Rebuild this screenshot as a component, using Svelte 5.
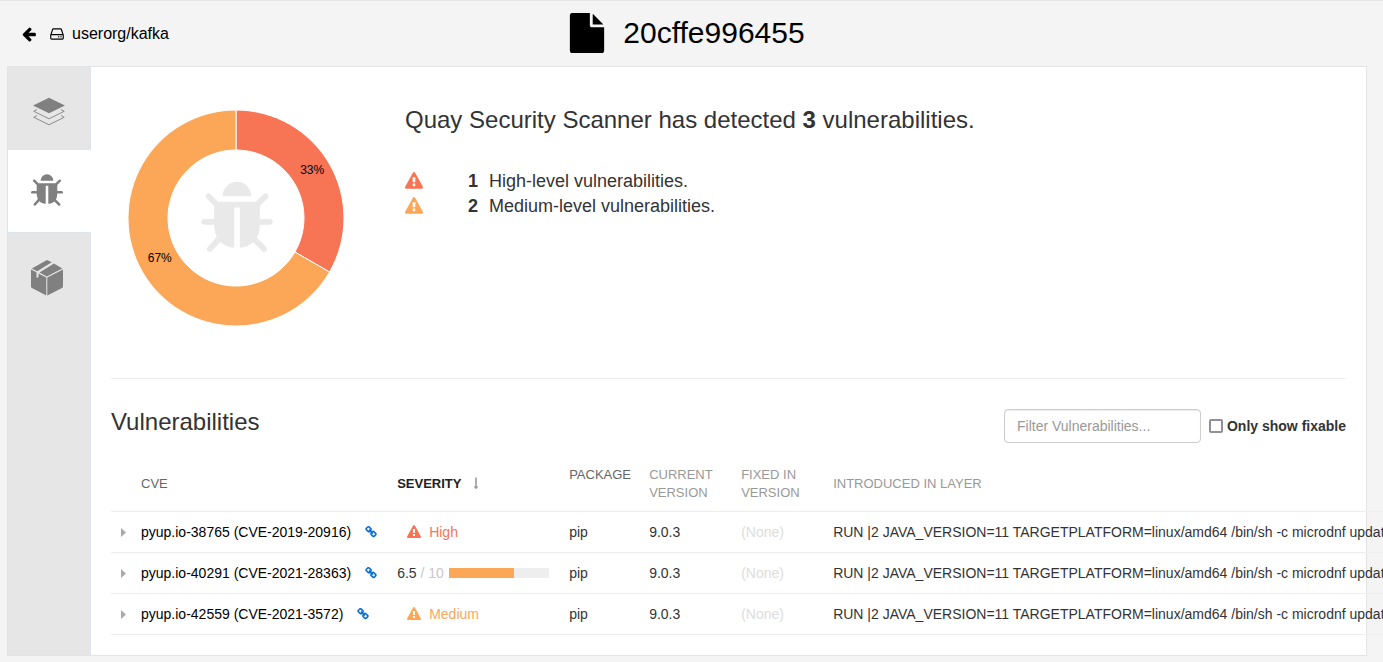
<script>
  const icons = {
    back: 'M1664 896v128q0 53-32.5 90.5t-84.5 37.5h-704l293 294q38 36 38 90t-38 90l-75 76q-37 37-90 37-52 0-91-37l-651-652q-37-37-37-90 0-52 37-91l651-650q38-38 91-38 52 0 90 38l75 74q38 38 38 91t-38 91l-293 293h704q52 0 84.5 37.5t32.5 90.5z',
    drive: 'M1168 1216q0 33-23.5 56.5t-56.5 23.5-56.5-23.5-23.5-56.5 23.5-56.5 56.5-23.5 56.5 23.5 23.5 56.5zm256 0q0 33-23.5 56.5t-56.5 23.5-56.5-23.5-23.5-56.5 23.5-56.5 56.5-23.5 56.5 23.5 23.5 56.5zm112 160v-320q0-13-9.5-22.5t-22.5-9.5h-1216q-13 0-22.5 9.5t-9.5 22.5v320q0 13 9.5 22.5t22.5 9.5h1216q13 0 22.5-9.5t9.5-22.5zm-1230-480h1180l-157-482q-4-13-16-21.5t-26-8.5h-782q-14 0-26 8.5t-16 21.5zm1358 160v320q0 66-47 113t-113 47h-1216q-66 0-113-47t-47-113v-320q0-25 16-75l197-606q17-53 63-86t101-33h782q55 0 101 33t63 86l197 606q16 50 16 75z',
    file: 'M1152 512v-472q22 14 36 28l408 408q14 14 28 36h-472zm-128 32q0 40 28 68t68 28h544v1056q0 40-28 68t-68 28h-1344q-40 0-68-28t-28-68v-1600q0-40 28-68t68-28h800v544z',
    bug: 'M1696 960q0 26-19 45t-45 19h-224q0 171-67 290l208 209q19 19 19 45t-19 45q-18 19-45 19t-45-19l-198-197q-5 5-15 13t-42 28.5-65 36.5-82 29-97 13v-896h-128v896q-51 0-101.5-13.5t-87-33-66-39-43.5-32.5l-15-14-183 207q-20 21-48 21-24 0-43-16-19-18-20.5-44.5t15.5-46.5l202-227q-58-114-58-274h-224q-26 0-45-19t-19-45 19-45 45-19h224v-294l-173-173q-19-19-19-45t19-45 45-19 45 19l173 173h844l173-173q19-19 45-19t45 19 19 45-19 45l-173 173v294h224q26 0 45 19t19 45zm-480-576h-640q0-133 93.5-226.5t226.5-93.5 226.5 93.5 93.5 226.5z',
    warning: 'M1024 1375v-190q0-14-9.5-23.5t-22.5-9.5h-192q-13 0-22.5 9.5t-9.5 23.5v190q0 14 9.5 23.5t22.5 9.5h192q13 0 22.5-9.5t9.5-23.5zm-2-374l18-459q0-12-10-19-13-11-24-11h-220q-11 0-24 11-10 7-10 21l17 457q0 10 10 16.5t24 6.5h185q14 0 23.5-6.5t10.5-16.5zm-14-934l768 1408q35 63-2 126-17 29-46.5 46t-63.5 17h-1536q-34 0-63.5-17t-46.5-46q-37-63-2-126l768-1408q17-31 47-49t65-18 65 18 47 49z',
    link: 'M1520 1216q0-40-28-68l-208-208q-28-28-68-28-42 0-72 32 3 3 19 18.5t21.5 21.5 15 19 13 25.5 3.5 27.5q0 40-28 68t-68 28q-15 0-27.5-3.5t-25.5-13-19-15-21.5-21.5-18.5-19q-33 31-33 73 0 40 28 68l206 207q27 27 68 27 40 0 68-26l147-146q28-28 28-67zm-703-705q0-40-28-68l-206-207q-28-28-68-28-39 0-68 27l-147 146q-28 28-28 67 0 40 28 68l208 208q27 27 68 27 42 0 72-31-3-3-19-18.5t-21.5-21.5-15-19-13-25.5-3.5-27.5q0-40 28-68t68-28q15 0 27.5 3.5t25.5 13 19 15 21.5 21.5 18.5 19q33-31 33-73zm895 705q0 120-85 203l-147 146q-83 83-203 83-121 0-204-85l-206-207q-83-83-83-203 0-123 88-209l-88-88q-86 88-208 88-120 0-204-84l-208-208q-84-84-84-204t85-203l147-146q83-83 203-83 121 0 204 85l206 207q83 83 83 203 0 123-88 209l88 88q86-88 208-88 120 0 204 84l208 208q84 84 84 204z'
  };

  const colors = { High: '#f77454', Medium: '#fca657' };
  const layer = 'RUN |2 JAVA_VERSION=11 TARGETPLATFORM=linux/amd64 /bin/sh -c microdnf update';

  const summary = [
    { level: 'High', count: 1 },
    { level: 'Medium', count: 2 }
  ];

  const rows = [
    { cve: 'pyup.io-38765 (CVE-2019-20916)', level: 'High', pkg: 'pip', version: '9.0.3' },
    { cve: 'pyup.io-40291 (CVE-2021-28363)', level: 'Medium', score: 6.5, pkg: 'pip', version: '9.0.3' },
    { cve: 'pyup.io-42559 (CVE-2021-3572)', level: 'Medium', pkg: 'pip', version: '9.0.3' }
  ];

  let filter = $state('');
  let onlyFixable = $state(false);
  let visible = $derived(
    rows.filter((r) => r.cve.toLowerCase().includes(filter.toLowerCase()) && !onlyFixable)
  );

  const total = summary.reduce((n, s) => n + s.count, 0);
  const outer = 108;
  const inner = 68;

  function point(fraction, radius) {
    const angle = fraction * 2 * Math.PI;
    return `${125 + radius * Math.sin(angle)} ${125 - radius * Math.cos(angle)}`;
  }

  function arc(from, to) {
    const large = to - from > 0.5 ? 1 : 0;
    return `M${point(from, outer)}A${outer} ${outer} 0 ${large} 1 ${point(to, outer)}L${point(to, inner)}A${inner} ${inner} 0 ${large} 0 ${point(from, inner)}Z`;
  }

  let used = 0;
  const slices = summary.map((s) => {
    const from = used / total;
    used += s.count;
    const to = used / total;
    const [x, y] = point((from + to) / 2, (outer + inner) / 2).split(' ');
    return { d: arc(from, to), x, y, color: colors[s.level], label: Math.round((s.count / total) * 100) + '%' };
  });
</script>

{#snippet icon(name, size)}
  <svg class="icon" width={size} height={size} viewBox="0 0 1792 1792" aria-hidden="true"><path d={icons[name]} /></svg>
{/snippet}

<div class="page">
  <header>
    <nav aria-label="Repository">
      <a href="#repo">
        {@render icon('back', 16)}
        {@render icon('drive', 16)}
        <span>userorg/kafka</span>
      </a>
    </nav>
    <h1>{@render icon('file', 40)}<span>20cffe996455</span></h1>
  </header>

  <div class="panel">
    <div class="tabs" role="tablist" aria-orientation="vertical">
      <button type="button" role="tab" aria-selected="false" aria-label="Layers">
        <svg width="36" height="36" viewBox="0 0 36 36" aria-hidden="true">
          <path d="M20 3.700 36 11.500 20 19.200 4 11.500z" fill="#808080" />
          <path d="M8 15.500 4.800 17.300 20 24.800 35.200 17.300 32 15.500M8 21.500 4.800 23.300 20 30.800 35.200 23.300 32 21.500" fill="none" stroke="#808080" stroke-width="0.900" />
        </svg>
      </button>
      <button type="button" role="tab" aria-selected="true" aria-label="Security scan">
        {@render icon('bug', 36)}
      </button>
      <button type="button" role="tab" aria-selected="false" aria-label="Packages">
        <svg width="36" height="36" viewBox="0 0 36 36" aria-hidden="true">
          <g fill="#808080">
            <path d="M17.300 17.500V35.500L3 28Q2 27.500 2 26.500V9.500L7.500 12.300V18L9.500 17V13.500z" />
            <path d="M18.300 17.500V35.500L33 28Q34 27.500 34 26.500V9.500z" />
            <path d="M2.800 8.500 18 0 22.800 2.300 8.200 11.200z" />
            <path d="M25 3.500 33.300 8.500 17.800 16.500 10.500 12.500z" />
          </g>
        </svg>
      </button>
    </div>

    <main>
      <section class="overview">
        <svg class="donut" width="250" height="250" viewBox="0 0 250 250" role="img" aria-label="Vulnerabilities by level">
          {#each slices as s}
            <path d={s.d} fill={s.color} stroke="#fff" />
          {/each}
          {#each slices as s}
            <text x={s.x} y={s.y} text-anchor="middle">{s.label}</text>
          {/each}
          <svg x="86" y="86" width="80" height="80" viewBox="0 0 1792 1792"><path d={icons.bug} fill="#e9e9e9" /></svg>
        </svg>
        <div class="report">
          <h2>Quay Security Scanner has detected <strong>{total}</strong> vulnerabilities.</h2>
          <ul>
            {#each summary as s}
              <li>
                <span class="mark" style="color: {colors[s.level]}">{@render icon('warning', 18)}</span>
                <strong>{s.count}</strong>
                <span>{s.level}-level vulnerabilities.</span>
              </li>
            {/each}
          </ul>
        </div>
      </section>

      <section class="details">
        <div class="toolbar">
          <h2>Vulnerabilities</h2>
          <input class="filter" type="text" aria-label="Filter Vulnerabilities" placeholder="Filter Vulnerabilities..." bind:value={filter} />
          <label><input type="checkbox" bind:checked={onlyFixable} />Only show fixable</label>
        </div>

        <table>
          <thead>
            <tr>
              <th class="c-toggle" aria-label="Expand"></th>
              <th class="c-cve"><a href="#cve">CVE</a></th>
              <th class="c-severity sorted" aria-sort="descending">
                <a href="#severity">Severity
                  <svg width="6" height="13" viewBox="0 0 6 13" aria-hidden="true"><path d="M2.200 0.500H3.800V9.500H5.500L3 12.300 0.500 9.500H2.200z" fill="#999" /></svg>
                </a>
              </th>
              <th class="c-package"><a href="#package">Package</a></th>
              <th class="c-version">Current Version</th>
              <th class="c-version">Fixed in Version</th>
              <th class="c-layer">Introduced in Layer</th>
            </tr>
          </thead>
          <tbody>
            {#each visible as r}
              <tr>
                <td class="c-toggle">
                  <button type="button" aria-label="Show details of {r.cve}">
                    <svg width="5" height="9" viewBox="0 0 5 9" aria-hidden="true"><path d="M0 0 5 4.500 0 9z" fill="#aaa" /></svg>
                  </button>
                </td>
                <td class="c-cve">
                  <div class="line">
                    <a class="name" href="#details">{r.cve}</a>
                    <a class="out" href="#advisory" aria-label="Open advisory">{@render icon('link', 12)}</a>
                  </div>
                </td>
                <td class="c-severity">
                  {#if r.score}
                    <div class="score">
                      <span>{r.score} <span class="of">/ 10</span></span>
                      <span class="bar"><span style="width: {r.score * 10}%; background: {colors[r.level]}"></span></span>
                    </div>
                  {:else}
                    <div class="level" style="color: {colors[r.level]}">{@render icon('warning', 14)}{r.level}</div>
                  {/if}
                </td>
                <td>{r.pkg}</td>
                <td>{r.version}</td>
                <td class="none">(None)</td>
                <td class="c-layer">{layer}</td>
              </tr>
            {/each}
          </tbody>
        </table>
      </section>
    </main>
  </div>
</div>

<style>
  :global(body) {
    background: #f4f4f4;
  }
  .page {
    box-sizing: border-box;
    display: flex;
    flex-direction: column;
    min-height: 100vh;
    padding: 0 16px 6px 7px;
    border-top: 1px solid #e4e4e4;
    overflow: hidden;
    color: #333;
    font: 14px/20px "Liberation Sans", Arial, sans-serif;
  }
  .page *,
  .page *::before {
    box-sizing: border-box;
  }
  h1,
  h2,
  ul {
    margin: 0;
    padding: 0;
    font-weight: normal;
    list-style: none;
  }
  a {
    color: inherit;
    text-decoration: none;
  }
  button {
    display: flex;
    padding: 0;
    border: 0;
    background: none;
    cursor: pointer;
  }
  .icon {
    display: block;
    flex: none;
    fill: currentColor;
  }
  header {
    display: grid;
    grid-template-columns: 1fr auto 1fr;
    align-items: center;
    height: 65px;
    color: #000;
  }
  nav a {
    display: flex;
    align-items: center;
    gap: 12px;
    padding-left: 14px;
    font-size: 16px;
  }
  nav span {
    margin-left: -5px;
  }
  h1 {
    display: flex;
    align-items: center;
    gap: 16px;
    padding: 0 2px 2px 0;
    font-size: 30px;
    line-height: 40px;
  }
  .panel {
    display: flex;
    flex: 1;
    border: 1px solid #e4e4e4;
    background: #fff;
  }
  .tabs {
    flex: none;
    width: 83px;
    border-right: 1px solid #dde4ea;
    background: #e6e6e6;
  }
  .tabs button {
    align-items: center;
    width: 83px;
    height: 83px;
    padding: 6px 0 0 21px;
    color: #808080;
  }
  .tabs button[aria-selected="true"] {
    padding-top: 0;
    border-bottom: 1px solid #dde4ea;
    background: #fff;
  }
  main {
    flex: 1;
    min-width: 0;
    padding: 20px;
  }
  .overview {
    display: flex;
    gap: 44px;
    padding: 6px 0 35px;
    border-bottom: 1px solid #eee;
  }
  .donut {
    display: block;
    flex: none;
  }
  .donut text {
    font-size: 12px;
    fill: #000;
  }
  .report h2 {
    padding: 12px 0 34px;
    font-size: 24px;
    line-height: 30px;
  }
  li {
    display: flex;
    align-items: center;
    font-size: 18px;
    line-height: 25px;
  }
  .mark {
    width: 63px;
    padding-bottom: 2px;
  }
  li strong {
    width: 21px;
  }
  .toolbar {
    display: flex;
    align-items: center;
    gap: 8px;
    padding: 30px 0 13px;
  }
  .toolbar h2 {
    flex: 1;
    padding-bottom: 8px;
    font-size: 24px;
    line-height: 26px;
  }
  .filter {
    width: 197px;
    height: 34px;
    padding: 6px 12px;
    border: 1px solid #ccc;
    border-radius: 4px;
    background: #fff;
    box-shadow: inset 0 1px 1px rgba(0, 0, 0, 0.075);
    color: #555;
    font: inherit;
  }
  .filter::placeholder {
    color: #999;
  }
  label {
    display: flex;
    align-items: center;
    gap: 4px;
    font-weight: bold;
  }
  label input {
    width: 14px;
    height: 14px;
    margin: 0;
    border: 2px solid #8f8f9d;
    border-radius: 2px;
    background: #fff;
    appearance: none;
  }
  label input:checked {
    background: #8f8f9d;
  }
  table {
    width: 100%;
    border-spacing: 0;
  }
  th,
  td {
    height: 41px;
    padding: 0 10px;
    border-bottom: 1px solid #eee;
    text-align: left;
    vertical-align: middle;
  }
  th {
    height: 56px;
    color: #999;
    font-size: 13px;
    font-weight: normal;
    line-height: 18px;
    text-transform: uppercase;
  }
  th a {
    color: #666;
  }
  .sorted a {
    display: flex;
    align-items: center;
    gap: 12px;
    color: #222;
    font-weight: bold;
  }
  .c-toggle {
    min-width: 20px;
    padding: 0;
  }
  .c-toggle button {
    padding: 4px 5px 4px 10px;
  }
  .c-cve {
    min-width: 254px;
  }
  .c-severity {
    min-width: 172px;
  }
  .c-package {
    min-width: 80px;
    padding: 10px 6px 0 10px;
    vertical-align: top;
  }
  .c-version {
    width: 92px;
    min-width: 92px;
  }
  .c-layer {
    white-space: nowrap;
  }
  .line,
  .level,
  .score {
    display: flex;
    align-items: center;
    white-space: nowrap;
  }
  .line {
    gap: 14px;
    color: #000;
  }
  .out {
    color: #0068cf;
  }
  .out :global(path) {
    stroke: currentColor;
    stroke-width: 60px;
  }
  .level {
    gap: 8px;
    padding-left: 10px;
  }
  .score {
    gap: 5px;
  }
  .of {
    color: #c8c8c8;
  }
  .bar {
    width: 100px;
    height: 10px;
    background: #eee;
  }
  .bar span {
    display: block;
    height: 100%;
  }
  .none {
    color: #ddd;
  }
</style>
